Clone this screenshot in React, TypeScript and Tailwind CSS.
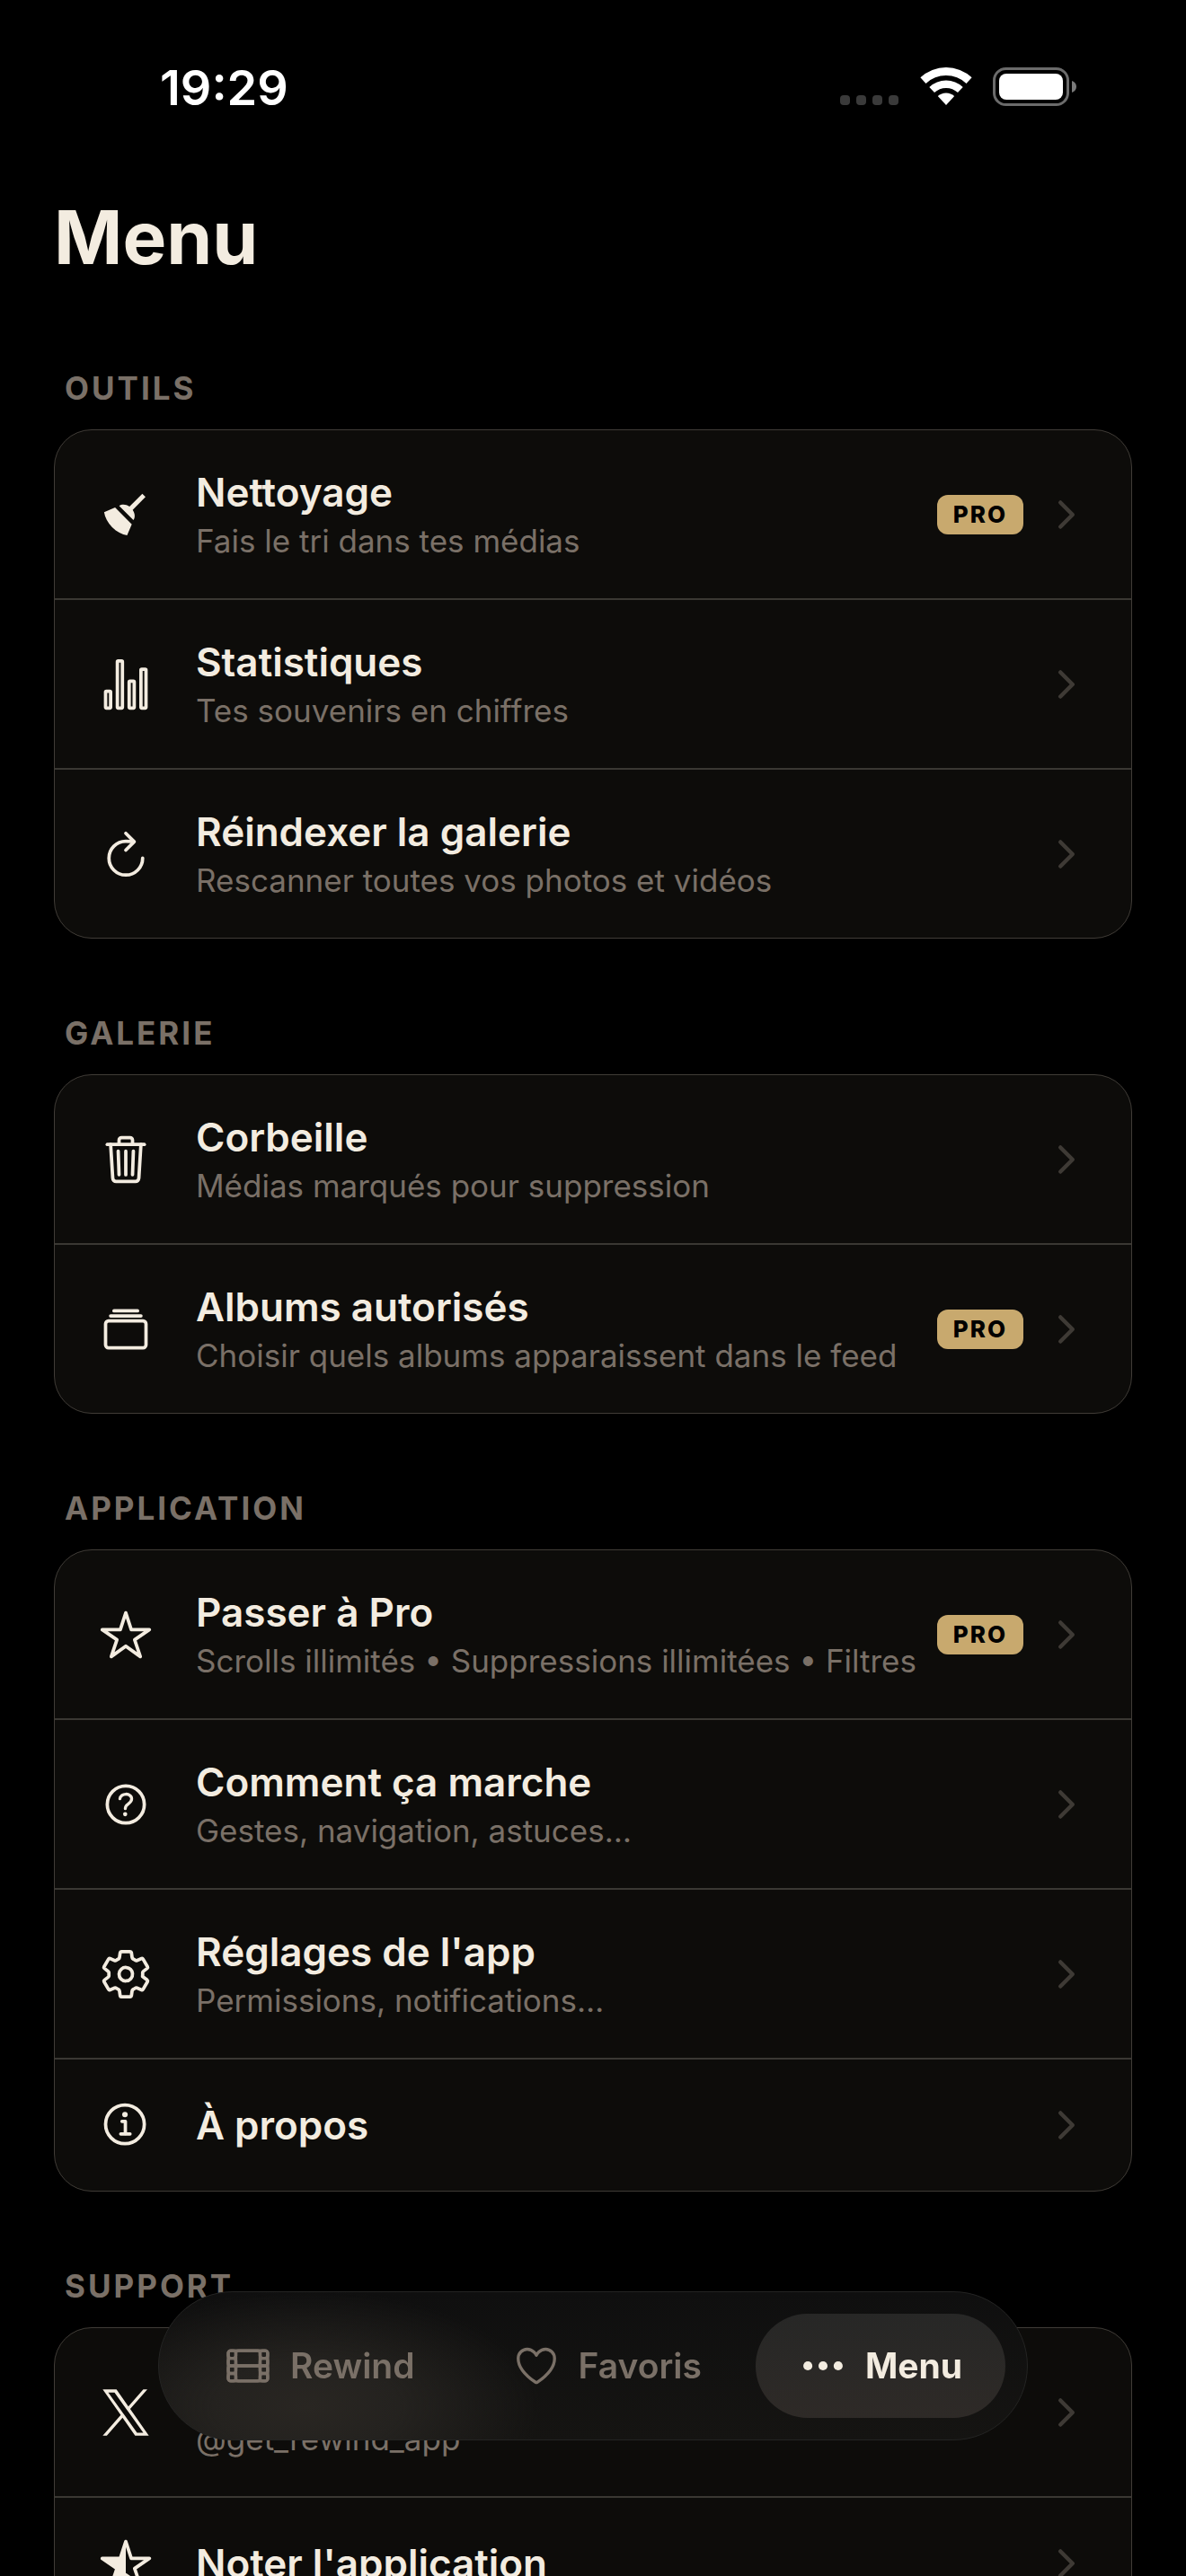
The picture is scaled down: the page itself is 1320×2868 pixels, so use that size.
import type { ReactNode } from "react";
import {
  IoAlbumsOutline,
  IoChevronForward,
  IoEllipsisHorizontal,
  IoFilmOutline,
  IoHeartOutline,
  IoHelpCircleOutline,
  IoInformationCircleOutline,
  IoRefreshOutline,
  IoSettingsOutline,
  IoStarHalf,
  IoStarOutline,
  IoStatsChartOutline,
  IoTrashOutline,
} from "react-icons/io5";

interface MenuEntry {
  id: string;
  title?: string;
  subtitle?: string;
  icon: ReactNode;
  pro?: boolean;
}

interface MenuSection {
  label: string;
  entries: MenuEntry[];
}

function BroomIcon() {
  return (
    <svg className="size-[60px]" viewBox="0 0 24 24" fill="currentColor" aria-hidden="true">
      <path d="M19.36,2.72L20.78,4.14L15.06,9.85C16.13,11.39 16.28,13.24 15.38,14.44L9.06,8.12C10.26,7.22 12.11,7.37 13.65,8.44L19.36,2.72M5.93,17.57C3.92,15.56 2.69,13.16 2.35,10.92L7.23,8.83L14.67,16.27L12.58,21.15C10.34,20.81 7.94,19.58 5.93,17.57Z" />
    </svg>
  );
}

function XLogo() {
  return (
    <svg className="size-[56px]" viewBox="0 0 24 24" fill="currentColor" aria-hidden="true">
      <path d="M14.095479,10.316482L22.286354,1h-1.940718l-7.115352,8.087682L7.551414,1H1l8.589488,12.231093L1,23h1.940717l7.509372,-8.542861L16.448587,23H23L14.095479,10.316482zM11.436522,13.338465l-0.871624,-1.218704l-6.924311,-9.68815h2.981339l5.58978,7.82155l0.867949,1.218704l7.26506,10.166271h-2.981339L11.436522,13.338465z" />
    </svg>
  );
}

const sections: MenuSection[] = [
  {
    label: "OUTILS",
    entries: [
      { id: "clean", title: "Nettoyage", subtitle: "Fais le tri dans tes médias", icon: <BroomIcon />, pro: true },
      { id: "stats", title: "Statistiques", subtitle: "Tes souvenirs en chiffres", icon: <IoStatsChartOutline /> },
      {
        id: "reindex",
        title: "Réindexer la galerie",
        subtitle: "Rescanner toutes vos photos et vidéos",
        icon: <IoRefreshOutline />,
      },
    ],
  },
  {
    label: "GALERIE",
    entries: [
      { id: "trash", title: "Corbeille", subtitle: "Médias marqués pour suppression", icon: <IoTrashOutline /> },
      {
        id: "albums",
        title: "Albums autorisés",
        subtitle: "Choisir quels albums apparaissent dans le feed",
        icon: <IoAlbumsOutline />,
        pro: true,
      },
    ],
  },
  {
    label: "APPLICATION",
    entries: [
      {
        id: "pro",
        title: "Passer à Pro",
        subtitle: "Scrolls illimités • Suppressions illimitées • Filtres",
        icon: <IoStarOutline />,
        pro: true,
      },
      {
        id: "help",
        title: "Comment ça marche",
        subtitle: "Gestes, navigation, astuces…",
        icon: <IoHelpCircleOutline />,
      },
      {
        id: "settings",
        title: "Réglages de l'app",
        subtitle: "Permissions, notifications…",
        icon: <IoSettingsOutline />,
      },
      { id: "about", title: "À propos", icon: <IoInformationCircleOutline /> },
    ],
  },
  {
    label: "SUPPORT",
    entries: [
      { id: "x", subtitle: "@get_rewind_app", icon: <XLogo /> },
      { id: "rate", title: "Noter l'application", icon: <IoStarHalf /> },
    ],
  },
];

const tabs = [
  { name: "Rewind", icon: <IoFilmOutline />, active: false },
  { name: "Favoris", icon: <IoHeartOutline />, active: false },
  { name: "Menu", icon: <IoEllipsisHorizontal />, active: true },
];

function StatusBar() {
  return (
    <header className="flex h-[196px] items-start justify-between pt-[66px] pr-[120px] pl-[178px] text-white">
      <span className="text-[54px] leading-[64px] font-semibold">19:29</span>
      <div className="flex h-[60px] items-center gap-[23px]">
        <svg className="h-[44px] w-[66px]" viewBox="0 0 66 44" fill="#3a3a3a" aria-hidden="true">
          <rect x="0" y="32" width="11" height="11" rx="4" />
          <rect x="18" y="32" width="11" height="11" rx="4" />
          <rect x="36" y="32" width="11" height="11" rx="4" />
          <rect x="54" y="32" width="11" height="11" rx="4" />
        </svg>
        <svg className="h-[44px] w-[58px]" viewBox="-29 -43 58 44" fill="currentColor" aria-hidden="true">
          <path d="M-28.600 -30.700A42 42 0 0 1 28.600 -30.700L22.500 -24.100A33 33 0 0 0 -22.500 -24.100Z" />
          <path d="M-18.700 -20.100A27.500 27.500 0 0 1 18.700 -20.100L13 -13.900A19 19 0 0 0 -13 -13.900Z" />
          <path d="M-9.200 -9.900A13.500 13.500 0 0 1 9.200 -9.900L0 0Z" />
        </svg>
        <svg className="h-[44px] w-[95px]" viewBox="0 0 95 44" aria-hidden="true">
          <rect x="1.500" y="2.500" width="82" height="40" rx="13" fill="none" stroke="#6b6b6b" strokeWidth="3" />
          <rect x="7" y="8" width="71" height="29" rx="8" fill="#fff" />
          <path d="M88 16c3 1 5 3.500 5 6.500s-2 5.500-5 6.500Z" fill="#7a7a7a" />
        </svg>
      </div>
    </header>
  );
}

function MenuRow({ entry }: { entry: MenuEntry }) {
  return (
    <li>
      <button
        type="button"
        className="flex min-h-[146px] w-full items-center gap-10 py-[42px] pr-12 pl-[41px] text-left"
      >
        <span className="flex w-[76px] shrink-0 justify-center text-[60px]">{entry.icon}</span>
        <span className="flex min-w-0 flex-1 flex-col gap-[5px]">
          <span className="h-[54px] text-[44px] leading-[54px] font-semibold">{entry.title}</span>
          {entry.subtitle && (
            <span className="text-[35px] leading-[44px] whitespace-nowrap text-[#7a7067]">{entry.subtitle}</span>
          )}
        </span>
        <span className="flex shrink-0 items-center gap-6">
          {entry.pro && (
            <span className="rounded-xl bg-[#c8a96e] px-[18px] text-[26px] leading-[44px] font-extrabold tracking-[2px] text-black">
              PRO
            </span>
          )}
          <IoChevronForward className="size-12 text-[#3e3a35]" />
        </span>
      </button>
    </li>
  );
}

export default function App() {
  return (
    <div className="relative h-screen overflow-hidden bg-black font-[Inter,sans-serif] text-[#f3ece0]">
      <StatusBar />

      <main className="px-[60px]">
        <h1 className="mt-[19px] mb-[95px] text-[82px] leading-[100px] font-bold">Menu</h1>

        <div className="flex flex-col gap-[83px]">
          {sections.map((section) => (
            <section key={section.label}>
              <h2 className="mb-6 pl-3 text-[35px] leading-[44px] font-bold tracking-[3px] text-[#7a7067]">
                {section.label}
              </h2>
              <ul className="divide-y-2 divide-[#3a3833] overflow-hidden rounded-[42px] border border-[#403c37] bg-[#0d0c0a]">
                {section.entries.map((entry) => (
                  <MenuRow key={entry.id} entry={entry} />
                ))}
              </ul>
            </section>
          ))}
        </div>
      </main>

      {/* Floating tab bar, with a soft glow on its left side */}
      <nav className="fixed bottom-[151px] left-1/2 flex -translate-x-1/2 gap-3 rounded-full border border-[#242423] bg-[#121210] bg-[radial-gradient(ellipse_260px_130px_at_17%_78%,#292622_0%,#24221f_40%,transparent_100%),linear-gradient(#0f0f0f,#151412)] p-6">
        {tabs.map((tab) => (
          <button
            key={tab.name}
            type="button"
            aria-current={tab.active ? "page" : undefined}
            className={`flex h-[116px] items-center gap-5 rounded-full px-12 text-[39px] ${
              tab.active ? "bg-linear-to-b from-[#272726] to-[#2e2a27] font-bold" : "font-semibold text-[#7a7067]"
            }`}
          >
            <span className="text-[54px]">{tab.icon}</span>
            {tab.name}
          </button>
        ))}
      </nav>
    </div>
  );
}
